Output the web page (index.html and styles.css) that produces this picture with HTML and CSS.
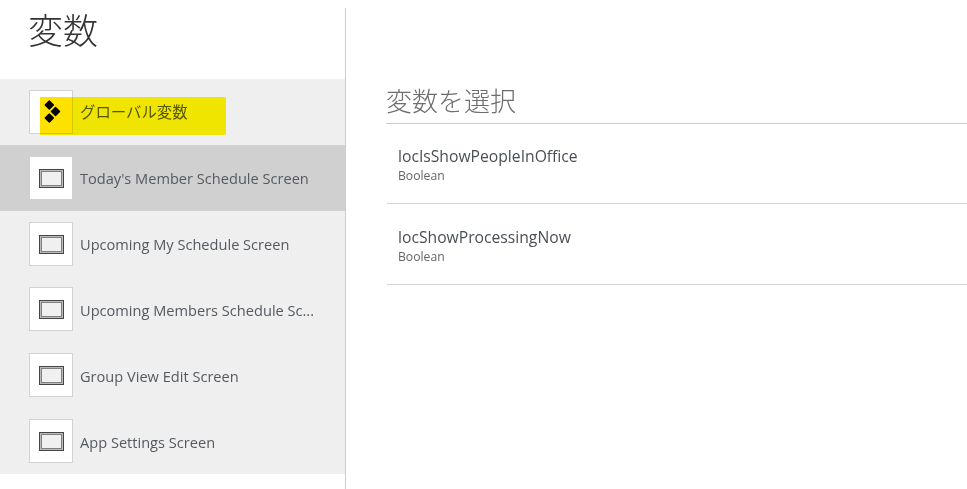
FILE: index.html
```html
<!DOCTYPE html>
<html lang="ja">
<head>
<meta charset="utf-8">
<title>変数</title>
<link rel="stylesheet" href="styles.css">
</head>
<body>
<div class="page">
  <aside class="side">
    <h1 class="title">変数</h1>
    <ul class="nav">
      <li class="row">
        <span class="tile tile-global">
          <span class="tile-patch"></span>
          <svg class="ico-global" width="22" height="24" viewBox="0 0 22 24"><path d="M7.300 1l4 4-4 4-4-4zM13.500 7.500l4 4-4 4-4-4zM7.300 14l4 4-4 4-4-4z" fill="#000" stroke="#000" stroke-width="1.500" stroke-linejoin="round"/></svg>
        </span>
        <span class="label label-ja">グローバル変数</span>
      </li>
      <li class="row active">
        <span class="tile"><svg width="25" height="19" viewBox="0 0 25 19"><rect width="25" height="19" fill="#444"/><rect x="1" y="1" width="23" height="17" fill="#bbb"/><rect x="2" y="2" width="21" height="15" fill="#808080"/><rect x="3" y="3" width="19" height="13" fill="#f0f0f0"/></svg></span>
        <span class="label">Today's Member Schedule Screen</span>
      </li>
      <li class="row">
        <span class="tile"><svg width="25" height="19" viewBox="0 0 25 19"><rect width="25" height="19" fill="#444"/><rect x="1" y="1" width="23" height="17" fill="#bbb"/><rect x="2" y="2" width="21" height="15" fill="#808080"/><rect x="3" y="3" width="19" height="13" fill="#f0f0f0"/></svg></span>
        <span class="label">Upcoming My Schedule Screen</span>
      </li>
      <li class="row">
        <span class="tile"><svg width="25" height="19" viewBox="0 0 25 19"><rect width="25" height="19" fill="#444"/><rect x="1" y="1" width="23" height="17" fill="#bbb"/><rect x="2" y="2" width="21" height="15" fill="#808080"/><rect x="3" y="3" width="19" height="13" fill="#f0f0f0"/></svg></span>
        <span class="label">Upcoming Members Schedule Sc...</span>
      </li>
      <li class="row">
        <span class="tile"><svg width="25" height="19" viewBox="0 0 25 19"><rect width="25" height="19" fill="#444"/><rect x="1" y="1" width="23" height="17" fill="#bbb"/><rect x="2" y="2" width="21" height="15" fill="#808080"/><rect x="3" y="3" width="19" height="13" fill="#f0f0f0"/></svg></span>
        <span class="label">Group View Edit Screen</span>
      </li>
      <li class="row">
        <span class="tile"><svg width="25" height="19" viewBox="0 0 25 19"><rect width="25" height="19" fill="#444"/><rect x="1" y="1" width="23" height="17" fill="#bbb"/><rect x="2" y="2" width="21" height="15" fill="#808080"/><rect x="3" y="3" width="19" height="13" fill="#f0f0f0"/></svg></span>
        <span class="label">App Settings Screen</span>
      </li>
    </ul>
    <div class="marker"></div>
  </aside>
  <main class="main">
    <h2 class="heading">変数を選択</h2>
    <ul class="vars">
      <li class="var">
        <div class="var-name">locIsShowPeopleInOffice</div>
        <div class="var-type">Boolean</div>
      </li>
      <li class="var">
        <div class="var-name">locShowProcessingNow</div>
        <div class="var-type">Boolean</div>
      </li>
    </ul>
  </main>
</div>
</body>
</html>
```
FILE: styles.css
```css
* { box-sizing: border-box; }
html, body { margin: 0; padding: 0; background: #fff; }
body {
  width: 967px;
  height: 489px;
  overflow: hidden;
  font-family: "Open Sans", "Noto Sans CJK JP", sans-serif;
}
ul { list-style: none; margin: 0; padding: 0; }
.page { display: flex; height: 489px; padding-top: 8px; }
.side {
  position: relative;
  width: 346px;
  flex: none;
  border-right: 1px solid #ccc;
}
.title {
  margin: 0;
  height: 71px;
  padding: 0 0 0 28px;
  font-family: "Noto Sans CJK JP", sans-serif;
  font-size: 35px;
  line-height: 42px;
  font-weight: 300;
  color: #333;
}
.nav { background: #efefef; }
.row {
  display: flex;
  align-items: center;
  height: 65.830px;
  padding-left: 29px;
  gap: 7px;
}
.row.active { background: #d0d0d0; }
.tile {
  position: relative;
  display: flex;
  align-items: center;
  justify-content: center;
  width: 44px;
  height: 44px;
  flex: none;
  background: #fff;
  border: 1px solid #d2d2d2;
}
.row.active .tile { border-color: #d0d0d0; }
.tile svg { position: relative; margin-top: 1px; }
.tile-patch {
  position: absolute;
  left: 10px;
  top: 6px;
  right: 0;
  bottom: 0;
  background: #ffeb00;
}
.tile svg.ico-global { position: absolute; left: 12px; top: 9px; margin: 0; }
.label {
  padding-top: 1px;
  font-size: 14.6px;
  line-height: 20px;
  color: #555a60;
  white-space: nowrap;
}
.label-ja { font-size: 15.4px; position: relative; top: 1px; }
.marker {
  position: absolute;
  left: 40px;
  top: 89px;
  width: 186px;
  height: 38px;
  background: #fff500;
  mix-blend-mode: multiply;
  border-radius: 1px 2px 2px 1px;
}
.main { flex: 1; padding: 73px 0 0 40px; min-width: 0; }
.heading {
  margin: 0;
  height: 43px;
  font-family: "Noto Sans CJK JP", sans-serif;
  font-size: 26px;
  line-height: 38px;
  font-weight: 300;
  color: #6d6d6d;
  border-bottom: 1px solid #ccc;
}
.vars { padding-left: 1px; }
.var {
  height: 80.400px;
  padding: 21px 0 0 11px;
  border-bottom: 1px solid #d2d2d2;
}
.var + .var { padding-top: 22px; }
.var-name {
  font-size: 15.7px;
  line-height: 22px;
  color: #4a4f55;
}
.var-type {
  font-size: 12.200px;
  line-height: 16px;
  padding-top: 1px;
  color: #666;
}
```
